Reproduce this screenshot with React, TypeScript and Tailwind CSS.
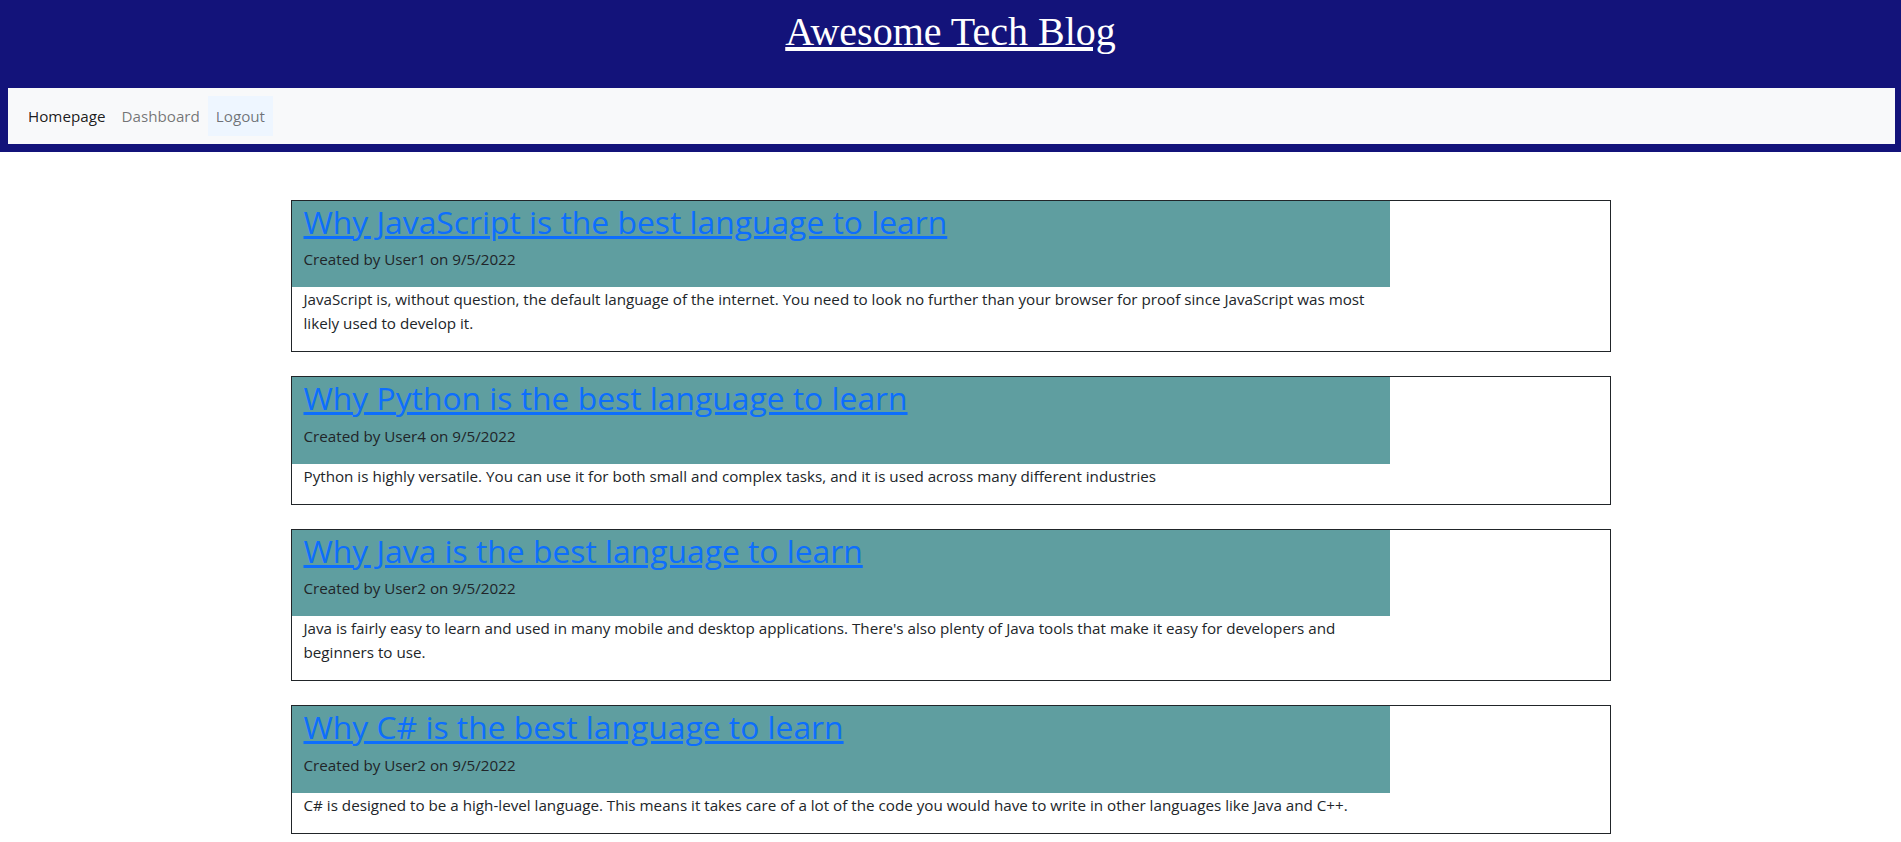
import React from 'react'

interface Post {
  id: number
  title: string
  author: string
  date: string
  body: string
}

const posts: Post[] = [
  {
    id: 1,
    title: 'Why JavaScript is the best language to learn',
    author: 'User1',
    date: '9/5/2022',
    body: 'JavaScript is, without question, the default language of the internet. You need to look no further than your browser for proof since JavaScript was most likely used to develop it.',
  },
  {
    id: 2,
    title: 'Why Python is the best language to learn',
    author: 'User4',
    date: '9/5/2022',
    body: 'Python is highly versatile. You can use it for both small and complex tasks, and it is used across many different industries',
  },
  {
    id: 3,
    title: 'Why Java is the best language to learn',
    author: 'User2',
    date: '9/5/2022',
    body: "Java is fairly easy to learn and used in many mobile and desktop applications. There's also plenty of Java tools that make it easy for developers and beginners to use.",
  },
  {
    id: 4,
    title: 'Why C# is the best language to learn',
    author: 'User2',
    date: '9/5/2022',
    body: 'C# is designed to be a high-level language. This means it takes care of a lot of the code you would have to write in other languages like Java and C++.',
  },
]

export default function App() {
  return (
    <div className="min-h-screen bg-white font-['Open_Sans',sans-serif] text-[15.2px] leading-6 text-[#212529]">
      {/* Header */}
      <header className="bg-[#13137a] pb-2">
        <div className="h-[88px] pt-[9px] text-center">
          <a
            href="#"
            className="font-['Liberation_Serif',serif] text-[40px] leading-[1.15] text-white underline"
          >
            Awesome Tech Blog
          </a>
        </div>
        <nav className="ml-2 mr-1.5 flex h-14 items-center bg-[#f8f9fa] px-3">
          <a href="#" className="px-2 py-2 text-black/90">
            Homepage
          </a>
          <a href="#" className="px-2 py-2 text-black/55">
            Dashboard
          </a>
          <button className="bg-[#eef6ff] px-2 py-2 text-black/55">Logout</button>
        </nav>
      </header>

      {/* Posts */}
      <main className="pt-12">
        {posts.map((post, i) => (
          <article
            key={post.id}
            className={`mx-auto flex max-w-[1320px] border border-[#212529] ${
              i < posts.length - 1 ? 'mb-6' : ''
            }`}
          >
            <div className="w-5/6">
              <div className="bg-[#5f9ea0] px-3 pb-4">
                <h2 className="mb-[5.4px] text-[31.8px] leading-[41px]">
                  <a href="#" className="text-[#0d6efd] underline">
                    {post.title}
                  </a>
                </h2>
                <p>
                  Created by {post.author} on {post.date}
                </p>
              </div>
              <p className="mb-4 px-3">{post.body}</p>
            </div>
          </article>
        ))}
      </main>
    </div>
  )
}
